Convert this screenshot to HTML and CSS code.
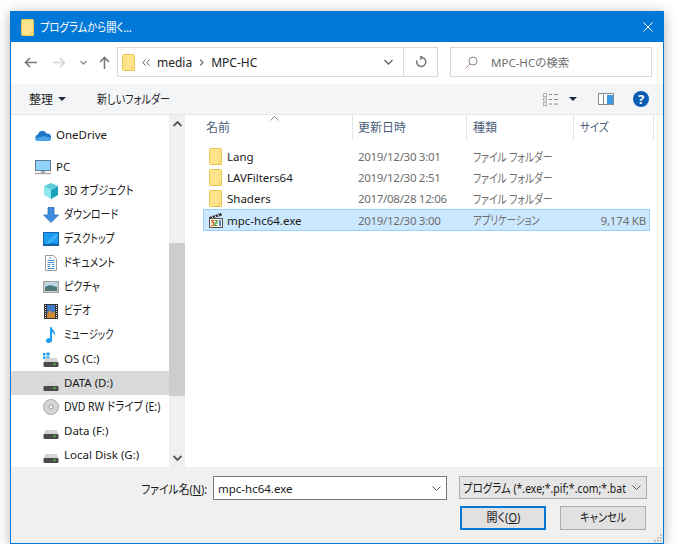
FILE: index.html
```html
<!DOCTYPE html>
<html lang="ja">
<head>
    <meta charset="UTF-8">
    <title>プログラムから開く...</title>
    <link rel="stylesheet" href="styles.css">
</head>
<body>
    <svg class="defs" width="0" height="0">
        <symbol id="folder" viewBox="0 0 13 17">
            <path d="M.5 1.500a1 1 0 0 1 1-1h10a1 1 0 0 1 1 1v15h-11a1 1 0 0 1-1-1z" fill="#fde48c" stroke="#eac54f"/>
            <path d="M10 16.500v-3h2.500" fill="#fff3c4" stroke="#eac54f"/>
        </symbol>
        <symbol id="drive" viewBox="0 0 16 10">
            <path d="M2.500 1h11l2 4.500H.5z" fill="#d4d4d4"/>
            <rect x=".5" y="5" width="15" height="5" rx="1" fill="#4a4a4a"/>
            <rect x="10.500" y="6.500" width="2" height="1.500" fill="#4fe04f"/>
        </symbol>
    </svg>

    <div class="window">
        <div class="titlebar">
            <svg class="title-icon" width="13" height="17"><use href="#folder"/></svg>
            <span class="title-text cond-86">プログラムから開く...</span>
            <svg class="close" width="10" height="10" viewBox="0 0 10 10"><path d="M.5.5l9 9M9.500.5l-9 9" stroke="#fff" fill="none"/></svg>
        </div>

        <div class="nav">
            <div class="nav-btn back">
                <svg width="13" height="11" viewBox="0 0 13 11"><path d="M13 5.500H1.500M6 1L1.500 5.500 6 10" stroke="#7a7a7a" stroke-width="1.600" fill="none"/></svg>
            </div>
            <div class="nav-btn forward">
                <svg width="13" height="11" viewBox="0 0 13 11"><path d="M0 5.500h11.500M7 1l4.500 4.500L7 10" stroke="#d5d5d5" stroke-width="1.600" fill="none"/></svg>
            </div>
            <div class="nav-btn recent">
                <svg width="7" height="5" viewBox="0 0 7 5"><path d="M.5 1l3 3 3-3" stroke="#8a8a8a" stroke-width="1.300" fill="none"/></svg>
            </div>
            <div class="nav-btn up">
                <svg width="11" height="13" viewBox="0 0 11 13"><path d="M5.500 13V1.500M1 6l4.500-4.500L10 6" stroke="#7a7a7a" stroke-width="1.600" fill="none"/></svg>
            </div>
            <div class="address">
                <svg class="address-icon" width="13" height="17"><use href="#folder"/></svg>
                <svg class="crumb-more" width="8" height="7" viewBox="0 0 8 7"><path d="M3.500.5L.8 3.500l2.700 3M7.500.5L4.800 3.500l2.700 3" stroke="#666" fill="none"/></svg>
                <span class="crumb">media</span>
                <svg class="crumb-sep" width="5" height="7" viewBox="0 0 5 7"><path d="M1 .5l3 3-3 3" stroke="#777" stroke-width="1.200" fill="none"/></svg>
                <span class="crumb">MPC-HC</span>
                <svg class="address-drop" width="9" height="6" viewBox="0 0 9 6"><path d="M.5 1l4 4 4-4" stroke="#666" stroke-width="1.400" fill="none"/></svg>
                <div class="refresh">
                    <svg width="12" height="13" viewBox="0 0 12 13"><path d="M5.500 1.500h1.500a4.500 4.500 0 1 1-5 3M5 0l2.500 1.500L5 3.500" stroke="#777" stroke-width="1.500" fill="none"/></svg>
                </div>
            </div>
            <div class="search">
                <svg width="13" height="13" viewBox="0 0 13 13"><circle cx="8" cy="5" r="4" stroke="#8a8a8a" fill="none"/><path d="M5 8l-4.500 4.500" stroke="#b08a80" fill="none"/></svg>
                <span>MPC-HCの検索</span>
            </div>
        </div>

        <div class="toolbar">
            <span class="tool-organize">整理</span>
            <span class="tool-caret"></span>
            <span class="tool-newfolder cond-84">新しいフォルダー</span>
            <svg class="tool-views" width="16" height="13" viewBox="0 0 16 13">
                <path d="M.5.5h3v3h-3zM.5 5h3v3h-3zM.5 9.500h3v3h-3z" fill="none" stroke="#707070" stroke-dasharray="1 1"/>
                <path d="M6 1.500h3M11 1.500h4M6 6.500h3M11 6.500h4M6 11h3M11 11h4" stroke="#8a8a8a" fill="none"/>
            </svg>
            <span class="tool-caret views-caret"></span>
            <svg class="tool-pane" width="16" height="12" viewBox="0 0 16 12">
                <rect x=".5" y=".5" width="15" height="11" fill="#fff" stroke="#8a8a8a"/>
                <path d="M5.500 1v10" stroke="#8a8a8a"/>
                <rect x="9" y="2" width="6" height="9" fill="#3c99e6"/>
            </svg>
            <svg class="tool-help" width="16" height="16" viewBox="0 0 16 16">
                <circle cx="8" cy="8" r="8" fill="#0a5fb4"/>
                <text x="8" y="12.500" text-anchor="middle" class="help-mark">?</text>
            </svg>
        </div>

        <div class="main">
            <div class="sidebar">
                <div class="tree">
                    <div class="tree-row root onedrive">
                        <svg width="16" height="11" viewBox="0 0 16 11"><path d="M3.500 11A3.300 3.300 0 0 1 3 4.500 4.500 4.500 0 0 1 11.500 3.500 3.800 3.800 0 0 1 16 8c0 1.800-1 3-2.500 3z" fill="#1f76c8"/><path d="M0 8.500C.5 11 2 11 3.500 11h10c1.500 0 2.500-1 2.500-3L9 6z" fill="#4aa3e8"/></svg>
                        <span>OneDrive</span>
                    </div>
                    <div class="tree-row root">
                        <svg width="16" height="15" viewBox="0 0 16 15"><rect x=".5" y=".5" width="15" height="10" fill="#8fd2fb" stroke="#5f7c92"/><path d="M6 11h4v2H6z" fill="#9aa7b0"/><path d="M0 13.500h16" stroke="#a9a9a9" stroke-width="1.500"/></svg>
                        <span>PC</span>
                    </div>
                    <div class="tree-row">
                        <svg width="16" height="16" viewBox="0 0 16 16"><path d="M1 3v9l7 4V7z" fill="#8fe6ec"/><path d="M8 7l7-4v9l-7 4z" fill="#19a4bc"/><path d="M8 7L1 3l7-3 7 3z" fill="#5fcbdc"/></svg>
                        <span class="cond-85">3D オブジェクト</span>
                    </div>
                    <div class="tree-row">
                        <svg width="16" height="16" viewBox="0 0 16 16"><path d="M5 .5h6v7.500h4.500L8 15.500.5 8H5z" fill="#3f8be0" stroke="#2f6fb8" stroke-width=".8"/></svg>
                        <span class="cond-83">ダウンロード</span>
                    </div>
                    <div class="tree-row">
                        <svg width="16" height="14" viewBox="0 0 16 14"><rect x=".5" y=".5" width="15" height="13" fill="#1a9cf0" stroke="#1467ae"/><path d="M1 12.500h14" stroke="#0f5ea4" stroke-width="1.500"/><path d="M2 11.500L13 2h1v3l-7 6.500z" fill="#3db2f7"/></svg>
                        <span class="cond-81">デスクトップ</span>
                    </div>
                    <div class="tree-row">
                        <svg width="16" height="16" viewBox="0 0 16 16"><path d="M2.500.5h8l3 3v12h-11z" fill="#fff" stroke="#9a9a9a"/><path d="M6 3h2M4.500 5.500h7M4.500 7.500h7M4.500 9.500h3M9 9.500h2.500M4.500 11.500h3M9 11.500h2.500M4.500 13.500h7" stroke="#4a92d0"/></svg>
                        <span class="cond-83">ドキュメント</span>
                    </div>
                    <div class="tree-row">
                        <svg width="16" height="12" viewBox="0 0 16 12"><rect x=".75" y=".75" width="14.500" height="10.500" fill="#fff" stroke="#a3a3a3" stroke-width="1.500"/><path d="M2 2h12v4H2z" fill="#b9d7ea"/><path d="M2 6l5-2 7 2v4H2z" fill="#4c7a78"/></svg>
                        <span class="cond-84">ピクチャ</span>
                    </div>
                    <div class="tree-row">
                        <svg width="16" height="15" viewBox="0 0 16 15"><rect x="1" width="14" height="15" fill="#333"/><rect x="4" y="1" width="8" height="13" fill="#3f78c4"/><path d="M4 10l3-4 2 3 3-2v7H4z" fill="#d08a35"/><path d="M2.500 1v13M13.500 1v13" stroke="#ddd" stroke-dasharray="1 1"/></svg>
                        <span class="cond-80">ビデオ</span>
                    </div>
                    <div class="tree-row">
                        <svg width="16" height="16" viewBox="0 0 16 16"><path d="M7 0h1.500c.5 3 4.500 4 3.500 9-.5-2-2-3.500-3-4v8.500c0 1.500-1.500 2.500-3.500 2.500S3 15 3 13.500 4.500 11 7 11z" fill="#1a9cf0"/></svg>
                        <span class="cond-78">ミュージック</span>
                    </div>
                    <div class="tree-row">
                        <svg width="16" height="15" viewBox="0 0 16 15"><path d="M0 1h2.500v2.500H0zM3.500.5h3V3.500h-3zM0 4.500h2.500V7H0zM3.500 4.500h3V7h-3z" fill="#1f9be8"/><use href="#drive" y="5" width="16" height="10"/></svg>
                        <span>OS (C:)</span>
                    </div>
                    <div class="tree-row selected">
                        <svg class="drive-icon" width="16" height="10"><use href="#drive"/></svg>
                        <span>DATA (D:)</span>
                    </div>
                    <div class="tree-row">
                        <svg width="16" height="16" viewBox="0 0 16 16"><circle cx="8" cy="8" r="7.500" fill="#d4d4d6" stroke="#a9a9ab"/><circle cx="8" cy="8" r="2" fill="#fff" stroke="#999"/></svg>
                        <span class="cond-87">DVD RW ドライブ (E:)</span>
                    </div>
                    <div class="tree-row">
                        <svg class="drive-icon" width="16" height="10"><use href="#drive"/></svg>
                        <span>Data (F:)</span>
                    </div>
                    <div class="tree-row">
                        <svg class="drive-icon" width="16" height="10"><use href="#drive"/></svg>
                        <span>Local Disk (G:)</span>
                    </div>
                </div>
                <div class="scrollbar">
                    <svg class="scroll-arrow" width="9" height="6" viewBox="0 0 9 6"><path d="M.5 5l4-4 4 4" stroke="#555" stroke-width="1.800" fill="none"/></svg>
                    <div class="scroll-thumb"></div>
                    <svg class="scroll-arrow down" width="9" height="6" viewBox="0 0 9 6"><path d="M.5 1l4 4 4-4" stroke="#555" stroke-width="1.800" fill="none"/></svg>
                </div>
            </div>

            <div class="files">
                <div class="file-head">
                    <div class="col-name">名前</div>
                    <div class="col-date">更新日時</div>
                    <div class="col-type">種類</div>
                    <div class="col-size"><span class="cond-88">サイズ</span></div>
                    <svg class="sort-mark" width="9" height="5" viewBox="0 0 9 5"><path d="M.5 4.500l4-4 4 4" stroke="#888" fill="none"/></svg>
                </div>
                <div class="file-row">
                    <div class="file-name"><svg width="13" height="17"><use href="#folder"/></svg>Lang</div>
                    <div class="file-meta file-date">2019/12/30 3:01</div>
                    <div class="file-meta"><span class="cond-81">ファイル フォルダー</span></div>
                    <div class="file-meta file-size"></div>
                </div>
                <div class="file-row">
                    <div class="file-name"><svg width="13" height="17"><use href="#folder"/></svg>LAVFilters64</div>
                    <div class="file-meta file-date">2019/12/30 2:51</div>
                    <div class="file-meta"><span class="cond-81">ファイル フォルダー</span></div>
                    <div class="file-meta file-size"></div>
                </div>
                <div class="file-row">
                    <div class="file-name"><svg width="13" height="17"><use href="#folder"/></svg>Shaders</div>
                    <div class="file-meta file-date">2017/08/28 12:06</div>
                    <div class="file-meta"><span class="cond-81">ファイル フォルダー</span></div>
                    <div class="file-meta file-size"></div>
                </div>
                <div class="file-row selected">
                    <div class="file-name">
                        <svg class="exe-icon" width="16" height="16" viewBox="0 0 16 16">
                            <path d="M1 5l12-4 1 2.500L2 7z" fill="#333"/>
                            <path d="M3.500 4.200l1.500 1.800M6.500 3.200L8 5M9.500 2.200L11 4" stroke="#eee"/>
                            <rect x="1.500" y="6.500" width="13" height="9" fill="#f8f4e6" stroke="#555"/>
                            <path d="M3 8.500h2.500L4 10.500h1.500v3H3" stroke="#d9662a" stroke-width="1.200" fill="none"/>
                            <path d="M7 8.500h2v2.500H7v2.500h2" stroke="#3e9a3e" stroke-width="1.200" fill="none"/>
                            <path d="M12 8v6" stroke="#2f6fc4" stroke-width="1.600"/>
                        </svg>mpc-hc64.exe
                    </div>
                    <div class="file-meta file-date">2019/12/30 3:00</div>
                    <div class="file-meta"><span class="cond-78">アプリケーション</span></div>
                    <div class="file-meta file-size">9,174 KB</div>
                </div>
            </div>
        </div>

        <div class="footer">
            <div class="footer-row">
                <div class="name-label"><span class="label-text">ファイル名(<u>N</u>):</span></div>
                <div class="name-input">
                    <span>mpc-hc64.exe</span>
                    <svg width="9" height="5" viewBox="0 0 9 5"><path d="M.5.5l4 4 4-4" stroke="#555" fill="none"/></svg>
                </div>
                <div class="type-select">
                    <span class="cond-87">プログラム (*.exe;*.pif;*.com;*.bat</span>
                    <svg width="9" height="5" viewBox="0 0 9 5"><path d="M.5.5l4 4 4-4" stroke="#555" fill="none"/></svg>
                </div>
            </div>
            <div class="footer-row buttons">
                <div class="btn primary"><span class="btn-text open-text">開く(<u>O</u>)</span></div>
                <div class="btn"><span class="btn-text cancel-text">キャンセル</span></div>
            </div>
            <svg class="grip" width="8" height="8" viewBox="0 0 8 8"><path d="M6 0h2v2H6zM3 3h2v2H3zM6 3h2v2H6zM0 6h2v2H0zM3 6h2v2H3zM6 6h2v2H6z" fill="#c4c4c4"/></svg>
        </div>
    </div>
</body>
</html>
```

FILE: styles.css
```css
body {
    margin: 0;
    background-color: #fff;
    font-family: "Noto Sans", "Noto Sans CJK JP", sans-serif;
    font-size: 11.5px;
    font-feature-settings: "palt";
    color: #1a1a1a;
}

svg {
    display: block;
    flex: none;
}

.defs {
    position: absolute;
}

/* the original font has narrow kana, so squeeze the Japanese strings */
.cond-78, .cond-80, .cond-81, .cond-83, .cond-84, .cond-85, .cond-86, .cond-87, .cond-88 {
    display: inline-block;
    font-size: 12px;
    white-space: nowrap;
    transform-origin: 0 50%;
}

.cond-78 { transform: scaleX(0.78); }
.cond-80 { transform: scaleX(0.8); }
.cond-81 { transform: scaleX(0.81); }
.cond-83 { transform: scaleX(0.83); }
.cond-84 { transform: scaleX(0.84); }
.cond-85 { transform: scaleX(0.85); }
.cond-86 { transform: scaleX(0.86); }
.cond-87 { transform: scaleX(0.87); }
.cond-88 { transform: scaleX(0.88); }

.window {
    position: relative;
    width: 652px;
    margin: 11px 0 0 10px;
    border: 1px solid #0078d7;
    background-color: #fff;
    box-shadow: 0 2px 12px rgba(0, 0, 0, 0.3);
}

.titlebar {
    display: flex;
    align-items: center;
    height: 30px;
    padding: 0 10px;
    background-color: #0078d7;
    color: #fff;
}

.title-text {
    margin-left: 6px;
    flex: 1;
}

.nav {
    display: flex;
    height: 42px;
    box-sizing: border-box;
    padding-top: 5px;
}

.nav-btn {
    display: flex;
    align-items: center;
    justify-content: center;
    height: 30px;
}

.back { width: 38px; }
.forward { width: 20px; }
.recent { width: 28px; }
.up { width: 14px; }

.address {
    display: flex;
    align-items: center;
    box-sizing: border-box;
    width: 321px;
    height: 30px;
    margin-left: 6px;
    border: 1px solid #d9d9d9;
}

.address-icon {
    margin-left: 4px;
}

.crumb-more {
    margin: 0 7px 0 7px;
}

.crumb {
    color: #222;
    font-size: 12px;
}

.crumb-sep {
    margin: 0 7px;
}

.address-drop {
    margin-left: auto;
    margin-right: 10px;
}

.refresh {
    display: flex;
    align-items: center;
    justify-content: center;
    width: 33px;
    height: 28px;
    border-left: 1px solid #d9d9d9;
}

.search {
    display: flex;
    align-items: center;
    box-sizing: border-box;
    width: 202px;
    height: 30px;
    margin-left: 12px;
    padding-left: 14px;
    border: 1px solid #d9d9d9;
    color: #6d6d6d;
}

.search span {
    margin-left: 13px;
}

.toolbar {
    display: flex;
    align-items: center;
    box-sizing: border-box;
    height: 31px;
    padding: 0 14px 0 18px;
    background-color: #f4f5f7;
    border-bottom: 1px solid #e3e5e8;
    color: #222;
}

.tool-organize {
    font-size: 12px;
}

.tool-caret {
    width: 0;
    height: 0;
    margin-left: 5px;
    border-left: 4px solid transparent;
    border-right: 4px solid transparent;
    border-top: 4px solid #1c2b41;
}

.tool-newfolder {
    margin-left: 31px;
}

.tool-views {
    margin-left: auto;
}

.views-caret {
    margin-left: 10px;
}

.tool-pane {
    margin-left: 21px;
}

.tool-help {
    margin-left: 19px;
}

.help-mark {
    font-size: 13px;
    font-weight: 700;
    fill: #fff;
}

.main {
    display: flex;
    height: 352px;
}

.sidebar {
    display: flex;
    width: 175px;
    flex: none;
}

.tree {
    box-sizing: border-box;
    width: 158px;
    padding-top: 8px;
    overflow: hidden;
}

.tree-row {
    display: flex;
    align-items: center;
    height: 24px;
    padding-left: 32px;
    white-space: nowrap;
}

.tree-row > svg {
    width: 16px;
}

.tree-row span {
    margin-left: 5px;
    padding-bottom: 2px;
}

.tree-row.root {
    padding-left: 24px;
}

.onedrive {
    margin-bottom: 8px;
}

.tree-row.selected {
    background-color: #d9d9d9;
}

.drive-icon {
    margin-top: 6px;
}

.scrollbar {
    display: flex;
    flex-direction: column;
    align-items: center;
    width: 16px;
    background-color: #f0f0f0;
}

.scroll-arrow {
    margin-top: 6px;
}

.scroll-thumb {
    align-self: stretch;
    height: 153px;
    margin-top: 116px;
    background-color: #cdcdcd;
}

.scroll-arrow.down {
    margin-top: 59px;
}

.files {
    flex: 1;
}

.file-head {
    position: relative;
    display: flex;
    height: 25px;
    margin-bottom: 6px;
    color: #4c607a;
    font-size: 12px;
    line-height: 25px;
}

.file-head div {
    box-sizing: border-box;
    border-right: 1px solid #e5e5e5;
}

.col-name {
    width: 167px;
    padding-left: 20px;
}

.col-date {
    width: 114px;
    padding-left: 5px;
}

.col-type {
    width: 107px;
    padding-left: 6px;
}

.col-size {
    width: 80px;
    padding-left: 6px;
}

.sort-mark {
    position: absolute;
    left: 84px;
    top: 1px;
}

.file-row {
    display: grid;
    grid-template-columns: 154px 115px 100px 73px;
    align-items: center;
    box-sizing: border-box;
    width: 447px;
    height: 21px;
    margin-left: 17px;
    border: 1px solid transparent;
}

.file-row.selected {
    height: 22px;
    background-color: #cce8ff;
    border-color: #99d1ff;
}

.file-name {
    display: flex;
    align-items: center;
    padding-left: 5px;
}

.file-name svg {
    margin-right: 5px;
}

.file-name .exe-icon {
    margin: 0 3px 0 -1px;
}

.file-meta {
    color: #6d6d6d;
    white-space: nowrap;
}

.file-date {
    letter-spacing: -0.3px;
}

.file-size {
    letter-spacing: -0.2px;
    text-align: right;
}

.footer {
    position: relative;
    box-sizing: border-box;
    height: 76px;
    padding-top: 9px;
    background-color: #f0f0f0;
}

.footer-row {
    display: flex;
    align-items: flex-start;
}

.name-label {
    box-sizing: border-box;
    width: 196px;
    padding-top: 4px;
    text-align: right;
    white-space: nowrap;
}

.label-text {
    display: inline-block;
    font-size: 12px;
    transform: scaleX(0.9);
    transform-origin: 100% 50%;
}

.name-input {
    display: flex;
    align-items: center;
    justify-content: space-between;
    box-sizing: border-box;
    width: 234px;
    height: 24px;
    margin-left: 6px;
    padding: 0 5px 0 4px;
    background-color: #fff;
    border: 1px solid #7a7a7a;
}

.type-select {
    display: flex;
    align-items: center;
    box-sizing: border-box;
    width: 188px;
    height: 23px;
    margin-left: 12px;
    padding: 0 5px 0 3px;
    background-color: #e5e5e5;
    border: 1px solid #adadad;
}

.type-select span {
    flex: 1;
    min-width: 0;
}

.buttons {
    margin-top: 6px;
    padding-left: 449px;
}

.btn {
    box-sizing: border-box;
    width: 86px;
    height: 24px;
    margin-right: 14px;
    background-color: #e1e1e1;
    border: 1px solid #adadad;
    text-align: center;
    line-height: 22px;
}

.btn.primary {
    border: 2px solid #0078d7;
    line-height: 20px;
}

.btn-text {
    display: inline-block;
    font-size: 12px;
    transform-origin: 50% 50%;
}

.open-text {
    transform: scaleX(0.92);
}

.cancel-text {
    transform: scaleX(0.85);
}

.grip {
    position: absolute;
    right: 1px;
    bottom: 1px;
}
```
